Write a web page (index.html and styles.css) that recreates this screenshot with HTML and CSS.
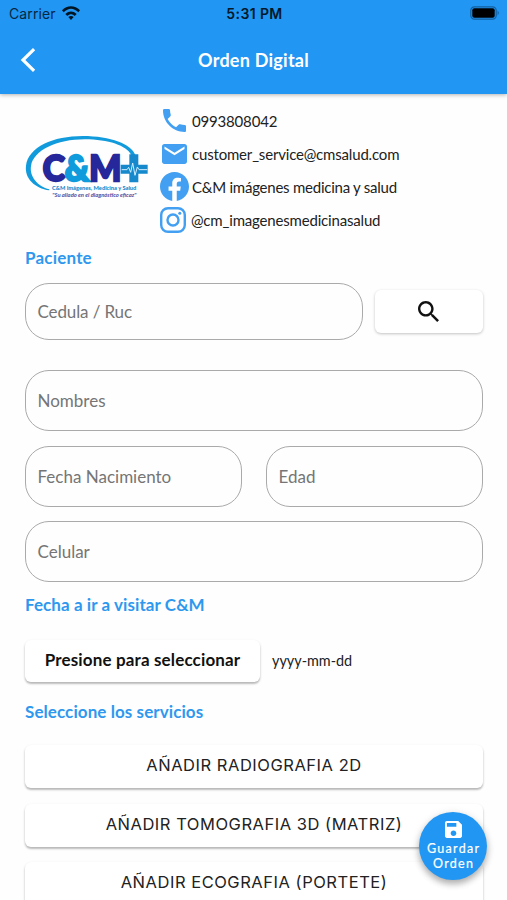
FILE: index.html
```html
<!DOCTYPE html>
<html lang="es">
<head>
<meta charset="utf-8">
<title>Orden Digital</title>
<link rel="stylesheet" href="styles.css">
</head>
<body>
<div class="screen">
  <header class="header">
    <div class="status">
      <div class="carrier">
        <span>Carrier</span>
        <svg class="wifi" viewBox="0 0 54 42"><path d="M0 13C15-3 39-3 54 13L49 19C35 5 19 5 5 19ZM10 24C20 14 34 14 44 24L38 30C31 23 23 23 16 30ZM19 33C24 29 30 29 35 33L27 42Z"/></svg>
      </div>
      <span class="time">5:31 PM</span>
      <svg class="battery" viewBox="0 0 30 14"><rect x=".8" y=".8" width="25.4" height="12.4" rx="3.6" fill="none" stroke="#1261a0" stroke-width="1.2"/><rect x="2.3" y="2.3" width="22.4" height="9.4" rx="2" fill="#000"/><path d="M27.6 4.6Q30 7 27.6 9.4Z" fill="#1261a0"/></svg>
    </div>
    <div class="navbar">
      <svg class="back" viewBox="0 0 16 26"><path d="M14.1 2.2L3 13l11.1 10.8"/></svg>
      <h1>Orden Digital</h1>
    </div>
  </header>

  <main>
    <section class="brand">
      <svg class="logo" viewBox="0 0 420 240">
        <path d="M103 196C60 190 28 160 33 122C40 66 115 33 203 33C288 33 349 58 361 90H349C335 62 280 43 209 43C126 43 55 76 48 123C43 155 68 184 103 193Z" fill="#119bdc"/>
        <path d="M343 88h27v31h28v27h-28v26h-27v-26h-26v-27h26z" fill="#1689cc"/>
        <text class="logo-name" x="83" y="169" textLength="236" lengthAdjust="spacingAndGlyphs"><tspan class="navy">C</tspan><tspan class="cyan">&amp;</tspan><tspan class="navy">M</tspan></text>
        <path d="M320 134h16l5-7 6 15 6-28 7 37 7-25 5 8h25" fill="none" stroke="#cfeeff" stroke-width="3"/>
        <text class="logo-line" x="111" y="195" textLength="253" lengthAdjust="spacingAndGlyphs">C&amp;M Imágenes, Medicina y Salud</text>
        <text class="logo-slogan" x="112" y="215" textLength="252" lengthAdjust="spacingAndGlyphs">"Su aliado en el diagnóstico eficaz"</text>
      </svg>
      <ul class="contacts">
        <li><svg class="ico phone" viewBox="3 3 18 18"><path d="M6.62 10.79c1.44 2.83 3.76 5.14 6.59 6.59l2.2-2.2c.27-.27.67-.36 1.02-.24 1.12.37 2.33.57 3.57.57.55 0 1 .45 1 1V20c0 .55-.45 1-1 1C10.61 21 3 13.39 3 4c0-.55.45-1 1-1h3.5c.55 0 1 .45 1 1 0 1.25.2 2.45.57 3.57.11.35.03.74-.25 1.02z"/></svg><span class="c-phone">0993808042</span></li>
        <li><svg class="ico mail" viewBox="2 4 20 16"><path d="M20 4H4c-1.1 0-1.99.9-1.99 2L2 18c0 1.1.9 2 2 2h16c1.1 0 2-.9 2-2V6c0-1.1-.9-2-2-2zm0 4l-8 5-8-5V6l8 5 8-5z"/></svg><span class="c-mail">customer_service@cmsalud.com</span></li>
        <li><svg class="ico fb" viewBox="0 0 24 24"><path d="M24 12.07C24 5.4 18.63 0 12 0S0 5.4 0 12.07C0 18.1 4.39 23.1 10.13 24v-8.44H7.08v-3.49h3.05V9.41c0-3.02 1.79-4.69 4.53-4.69 1.31 0 2.68.24 2.68.24v2.97h-1.51c-1.49 0-1.96.93-1.96 1.89v2.25h3.33l-.53 3.49h-2.8V24C19.61 23.1 24 18.1 24 12.07z"/></svg><span class="c-fb">C&amp;M imágenes medicina y salud</span></li>
        <li><svg class="ico ig" viewBox="0 0 26 26"><rect x="1.2" y="1.2" width="23.6" height="23.6" rx="6.8"/><circle cx="13" cy="13" r="5.5"/><circle class="dot" cx="19.8" cy="6.2" r="1.5"/></svg><span class="c-ig">@cm_imagenesmedicinasalud</span></li>
      </ul>
    </section>

    <h2 class="h-patient">Paciente</h2>
    <div class="search-row">
      <div class="field short">Cedula / Ruc</div>
      <button class="btn search" aria-label="Buscar"><svg viewBox="3 3 17.5 17.5"><path d="M15.5 14h-.79l-.28-.27C15.41 12.59 16 11.11 16 9.5 16 5.91 13.09 3 9.5 3S3 5.91 3 9.5 5.91 16 9.5 16c1.61 0 3.09-.59 4.23-1.57l.27.28v.79l5 4.99L20.49 19l-4.99-5zm-6 0C7.01 14 5 11.99 5 9.5S7.01 5 9.5 5 14 7.01 14 9.5 11.99 14 9.5 14z"/></svg></button>
    </div>
    <div class="fields">
      <div class="field">Nombres</div>
      <div class="pair">
        <div class="field">Fecha Nacimiento</div>
        <div class="field">Edad</div>
      </div>
      <div class="field">Celular</div>
    </div>

    <h2 class="h-date">Fecha a ir a visitar C&amp;M</h2>
    <div class="date-row">
      <button class="btn pick">Presione para seleccionar</button>
      <span>yyyy-mm-dd</span>
    </div>

    <h2 class="h-services">Seleccione los servicios</h2>
    <div class="services">
      <button class="btn service">AÑADIR RADIOGRAFIA 2D</button>
      <button class="btn service">AÑADIR TOMOGRAFIA 3D (MATRIZ)</button>
      <button class="btn service">AÑADIR ECOGRAFIA (PORTETE)</button>
    </div>
  </main>

  <button class="fab">
    <svg viewBox="3 3 18 18"><path d="M17 3H5c-1.11 0-2 .9-2 2v14c0 1.1.89 2 2 2h14c1.1 0 2-.9 2-2V7l-4-4zm-5 16c-1.66 0-3-1.34-3-3s1.34-3 3-3 3 1.34 3 3-1.34 3-3 3zm3-10H5V5h10v4z"/></svg>
    <span>Guardar</span>
    <span>Orden</span>
  </button>
</div>
</body>
</html>
```

FILE: styles.css
```css
* { box-sizing: border-box; margin: 0; padding: 0; }
html, body { height: 100%; overflow: hidden; }
body { background: #fefefe; font-family: Lato, sans-serif; color: #222; }
button { border: 0; font: inherit; color: inherit; }
svg { display: block; flex: none; }

.screen { position: relative; width: 507px; height: 900px; overflow: hidden; }

.header {
  height: 94px;
  background: #2196f3;
  box-shadow: 0 1px 4px rgba(0, 0, 0, .3);
}
.status {
  display: grid;
  grid-template-columns: 1fr auto 1fr;
  align-items: center;
  height: 27px;
  padding: 0 7px 0 9px;
  font: 14px/27px Inter, sans-serif;
  color: #082743;
}
.carrier { display: flex; align-items: center; gap: 6px; letter-spacing: .1px; }
.wifi { width: 18px; height: 14px; fill: #001524; margin-top: -2px; }
.time { font-weight: 600; color: #03192b; letter-spacing: .4px; }
.battery { width: 30px; height: 14px; justify-self: end; margin-top: -1px; }
.navbar {
  display: grid;
  grid-template-columns: 50px 1fr 50px;
  align-items: center;
  height: 66px;
}
.back { width: 16px; height: 26px; margin-left: 20px; fill: none; stroke: #fff; stroke-width: 3.2; }
h1 { text-align: center; color: #fff; font-size: 18px; line-height: 24px; font-weight: 700; letter-spacing: .25px; }

main { padding: 10px 24px 0 25px; }
.brand { display: flex; height: 132px; }
.logo { width: 140px; height: 80px; margin: 21px 0 0 -10px; }
.logo-name { font: 900 106px Lato, sans-serif; stroke-width: 7; }
.navy { fill: #25279a; stroke: #25279a; }
.cyan { fill: #109bdc; stroke: #109bdc; }
.logo-line { font: 900 17px Lato, sans-serif; fill: #1689cc; }
.logo-slogan { font: italic 700 14px Lato, sans-serif; fill: #4c4aa0; }
.contacts { list-style: none; margin-left: 4px; }
.contacts li { display: flex; align-items: center; height: 33px; font-size: 15px; line-height: 20px; white-space: nowrap; }
.c-phone, .c-mail, .c-ig { letter-spacing: -.18px; }
.c-fb { letter-spacing: -.24px; }
.ico { fill: #429ff1; }
.phone { width: 23px; height: 23px; margin: 0 6px 0 4px; }
.mail { width: 25px; height: 20px; margin: 0 5px 0 3px; }
.fb { width: 29px; height: 29px; margin: 0 3px 0 1px; }
.ig { width: 26px; height: 26px; margin: 0 5px 0 1px; fill: none; stroke: #429ff1; stroke-width: 2.4; }
.ig .dot { fill: #429ff1; stroke: none; }

h2 { color: #2e98ef; font-size: 17px; line-height: 22px; font-weight: 700; letter-spacing: .08px; }
.h-patient { margin-top: 11px; letter-spacing: .2px; }
.search-row { display: flex; justify-content: space-between; margin-top: 14px; }
.field {
  display: flex;
  align-items: center;
  height: 61px;
  padding: 0 12px 0 11.5px;
  border: 1px solid #aaa;
  border-radius: 24px;
  font-size: 17px;
  color: #757575;
}
.field.short { width: 338px; height: 57px; letter-spacing: -.12px; }
.btn {
  display: flex;
  align-items: center;
  justify-content: center;
  background: #fff;
  border-radius: 6px;
  box-shadow: 0 2px 2px rgba(0, 0, 0, .22), 0 1px 3px rgba(0, 0, 0, .1);
}
.search { width: 108px; height: 43px; margin-top: 7px; padding-right: 2px; box-shadow: 0 1px 3px rgba(0, 0, 0, .24); }
.search svg { width: 21px; height: 21px; fill: #111; }
.fields { display: grid; gap: 14.5px; margin-top: 30px; }
.pair { display: grid; grid-template-columns: 217px 217px; justify-content: space-between; }

.h-date { margin-top: 12px; }
.date-row { display: flex; align-items: center; gap: 12px; margin-top: 24px; font-size: 14.4px; }
.date-row span { margin-top: -2px; }
.pick { width: 235px; height: 42px; padding-bottom: 3px; font-size: 17px; font-weight: 700; letter-spacing: .15px; color: #111; }
.h-services { margin-top: 19px; }
.services { display: grid; gap: 15.5px; margin-top: 22px; }
.service { height: 43px; padding-bottom: 3px; font: 16.5px Inter, sans-serif; letter-spacing: .53px; }

.fab {
  position: absolute;
  left: 419px;
  top: 812px;
  display: flex;
  flex-direction: column;
  align-items: center;
  width: 68px;
  height: 68px;
  padding-top: 9px;
  border-radius: 50%;
  background: #2196f3;
  box-shadow: 0 4px 6px rgba(0, 0, 0, .25), 0 2px 10px rgba(0, 0, 0, .12);
  color: #fff;
  font-size: 12.5px;
  line-height: 14.5px;
  letter-spacing: 1.3px;
}
.fab span { margin-right: -1.3px; -webkit-text-stroke: .2px #fff; }
.fab svg { width: 17px; height: 17px; margin-bottom: 4px; fill: #fff; }
```
